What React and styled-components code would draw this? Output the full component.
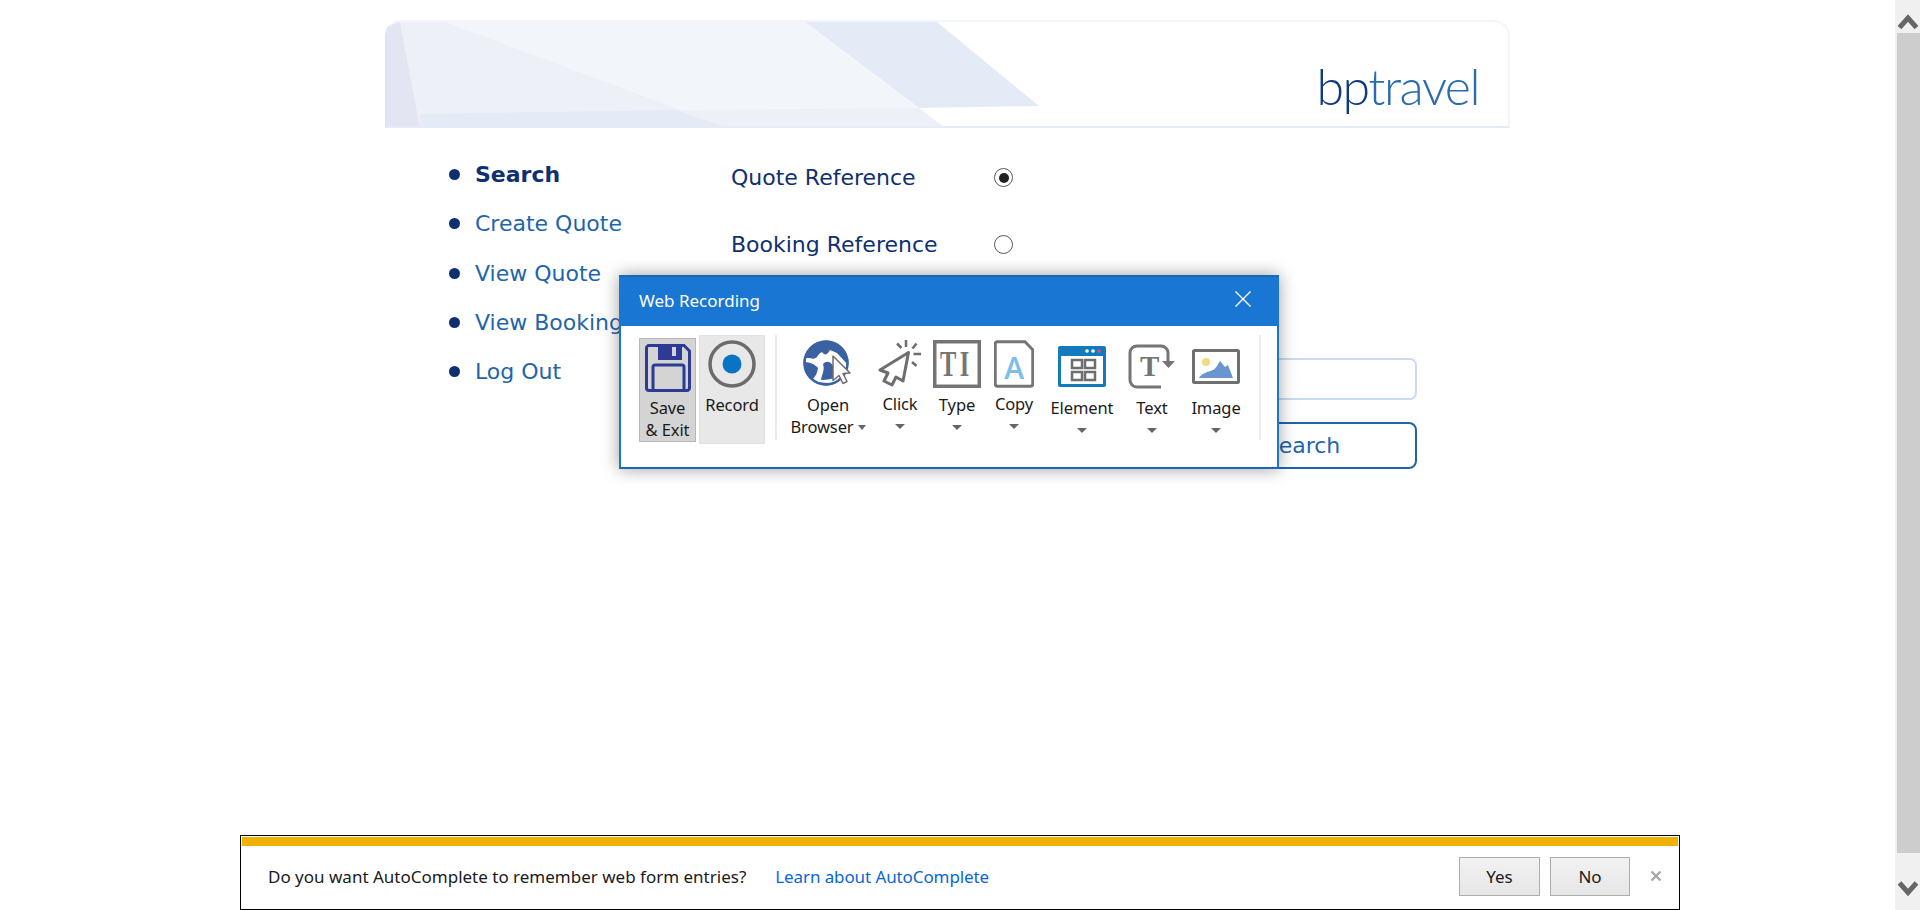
import React from 'react';
import styled, { createGlobalStyle } from 'styled-components';

const GlobalStyle = createGlobalStyle`
    html, body { margin: 0; padding: 0; background: #ffffff; overflow: hidden; }
    * { box-sizing: border-box; }
`

const UI_FONT = `"Noto Sans", "Open Sans", sans-serif`;
const PAGE_FONT = `"DejaVu Sans", Verdana, sans-serif`;

const Page = styled.div`
    width: 1920px; height: 910px;
    display: flex;
    position: relative;
    overflow: hidden;
`

const Main = styled.main`
    flex: 1;
    padding-top: 20px;
`

const Wrapper = styled.div`
    width: 1125px;
    margin: 0 auto;
`

/* banner */
const Banner = styled.header`
    height: 108px;
    display: flex;
    justify-content: flex-end;
    padding: 34px 29px 0 0;
    position: relative;
    overflow: hidden;
    border-radius: 16px 16px 0 0;
    border: 2px solid #f2f5fa;
    border-left-color: #dbe4f4;
    border-bottom-color: #e6ebf6;
`

const BannerArt = styled.svg`
    position: absolute;
    top: 0; left: 0;
`

const Logo = styled.div`
    position: relative;
    font-family: Lato, sans-serif;
    font-weight: 300;
    font-size: 50px;
    line-height: 60px;
    letter-spacing: -1.5px;
    color: #2a6cb0;
    span { color: #0f3a80; }
`

const Content = styled.div`
    display: flex;
`

const Nav = styled.ul`
    width: 346px;
    margin: 0;
    padding: 22px 0 0 64px;
    list-style: none;
    font-family: ${PAGE_FONT};
    font-size: 22px;
`

const NavItem = styled.li`
    height: 49.3px;
    line-height: 49.3px;
    position: relative;
    padding-left: 26px;
    white-space: nowrap;
    color: ${(props) => props.$active ? '#0f3070' : '#1f65ab'};
    font-weight: ${(props) => props.$active ? 'bold' : 'normal'};

    &::before {
        content: '';
        position: absolute;
        left: 0; top: 19px;
        width: 11px; height: 11px;
        border-radius: 50%;
        background: #0f3070;
    }
`

const Form = styled.form`
    width: 686px;
    padding-top: 16px;
    font-family: ${PAGE_FONT};
    font-size: 22px;
    display: flex;
    flex-direction: column;
`

const Row = styled.div`
    height: 67px;
    display: flex;
    align-items: center;
    color: #0f3070;
`

const RowLabel = styled.label`
    width: 263px;
`

const Radio = styled.span`
    width: 19px; height: 19px;
    border-radius: 50%;
    border: 1.5px solid #5a5a5a;
    display: flex;
    align-items: center;
    justify-content: center;

    &::after {
        content: '';
        width: 10px; height: 10px;
        border-radius: 50%;
        background: ${(props) => props.$checked ? '#222222' : 'transparent'};
    }
`

const SearchInput = styled.input`
    align-self: flex-end;
    width: 225px; height: 42px;
    margin-top: 80px;
    border: 2px solid #c9dcf2;
    border-radius: 7px;
    background: #ffffff;
`

const SearchButton = styled.button`
    align-self: flex-end;
    width: 225px; height: 47px;
    margin-top: 22px;
    padding: 0 4px 0 0;
    border: 2px solid #1f65ab;
    border-radius: 8px;
    background: #ffffff;
    color: #1f65ab;
    font-family: ${PAGE_FONT};
    font-size: 22px;
`

/* recording window */
const Dialog = styled.section`
    position: absolute;
    left: 619px; top: 275px;
    width: 660px; height: 194px;
    border: 2px solid #1976d2;
    border-top: 0;
    border-bottom-color: #1a67b8;
    background: #ffffff;
    box-shadow: 0 0 16px rgba(0, 0, 0, 0.38);
    font-family: ${UI_FONT};
`

const TitleBar = styled.div`
    height: 51px;
    margin: 0 -2px;
    padding: 0 27px 2px 20px;
    background: #1976d2;
    border-top: 2px solid #1a67b8;
    color: #ffffff;
    font-size: 17px;
    display: flex;
    align-items: center;
    justify-content: space-between;
`

const CloseIcon = styled.svg`
    width: 18px; height: 18px;
    margin-top: -3px;
`

const Toolbar = styled.div`
    display: flex;
    align-items: flex-start;
    padding: 9px 0 0 18px;
`

const Tool = styled.div`
    width: ${(props) => props.$width}px;
    display: flex;
    flex-direction: column;
    align-items: center;
    color: #1a1a1a;
    font-size: 16.5px;
    line-height: 22px;
    letter-spacing: -0.1px;
`

const ActiveTool = styled(Tool)`
    height: 104px;
    margin-top: 3px;
    margin-right: 3px;
    background: #d4d4d4;
    border: 1px solid #b8b8b8;
`

const RecordTool = styled(Tool)`
    height: 109px;
    background: #e8e8e8;
    border: 1px solid #e2e2e2;
`

const IconSlot = styled.div`
    height: ${(props) => props.$slot || 58}px;
    padding-top: ${(props) => props.$top || 5}px;
    flex-shrink: 0;
    svg { display: block; }
`

const Caret = styled.i`
    display: block;
    width: 0; height: 0;
    margin-top: 9px;
    border-left: 5px solid transparent;
    border-right: 5px solid transparent;
    border-top: 5px solid #666666;
`

const BrowserLine = styled.div`
    display: flex;
    align-items: center;
    gap: 4px;
    ${Caret} { margin-top: 0; border-left-width: 4.5px; border-right-width: 4.5px; }
`

const Separator = styled.div`
    width: 2px; height: 105px;
    background: #ececec;
    margin: 0 ${(props) => props.$right || 0}px 0 ${(props) => props.$left || 0}px;
`

/* autocomplete bar */
const InfoBar = styled.aside`
    position: absolute;
    left: 240px; top: 835px;
    width: 1440px; height: 75px;
    border: 1px solid #000000;
    padding: 1px;
    background: #ffffff;
    font-family: ${UI_FONT};
    font-size: 17px;
    color: #1a1a1a;
`

const InfoStripe = styled.div`
    height: 9px;
    background: #f2b000;
`

const InfoBody = styled.div`
    display: flex;
    align-items: center;
    height: 60px;
    padding: 0 16px 0 26px;
`

const InfoLink = styled.a`
    margin-left: 29px;
    color: #0a66d6;
    letter-spacing: -0.1px;
`

const InfoButton = styled.button`
    width: ${(props) => props.$width}px; height: 39px;
    margin-left: ${(props) => props.$left || 0}px;
    border: 1px solid #adadad;
    background: linear-gradient(#f2f2f2, #e6e6e6);
    color: #1a1a1a;
    font-family: ${UI_FONT};
    font-size: 17px;
`

const InfoClose = styled.svg`
    width: 12px; height: 12px;
    margin-left: 20px;
    margin-top: -1px;
`

const InfoActions = styled.div`
    margin-left: auto;
    display: flex;
    align-items: center;
`

/* scrollbar */
const ScrollBar = styled.div`
    width: 25px; height: 910px;
    background: #f0f0f0;
    display: flex;
    flex-direction: column;
    align-items: center;
    padding-top: 13px;
`

const ScrollThumb = styled.div`
    width: 23px; height: 820px;
    margin: 3px 0 27px 1px;
    background: #cdcdcd;
`

const Chevron = ({ up }) => (
    <svg width="20" height="17" viewBox="0 0 20 17">
        <polyline points={up ? '1.5,14.5 10,5 18.5,14.5' : '1.5,3 10,12.5 18.5,3'} fill="none" stroke="#666666" strokeWidth="5" />
    </svg>
)

const SaveIcon = () => (
    <svg width="46" height="48" viewBox="0 0 46 48">
        <path d="M4 1.5h35l5.5 5.5v37a2.5 2.5 0 0 1-2.5 2.5H4a2.5 2.5 0 0 1-2.5-2.5V4A2.5 2.5 0 0 1 4 1.5z" fill="none" stroke="#2e3a94" strokeWidth="3" />
        <path d="M13 2h24v14H13z" fill="#2e3a94" />
        <path d="M27 3h4v9h-4z" fill="#d4d4d4" />
        <path d="M8 47V23a2 2 0 0 1 2-2h27a2 2 0 0 1 2 2v24" fill="none" stroke="#2e3a94" strokeWidth="3" />
    </svg>
)

const RecordIcon = () => (
    <svg width="48" height="48" viewBox="0 0 48 48">
        <circle cx="24" cy="24" r="22" fill="none" stroke="#6b6b6b" strokeWidth="3.5" />
        <circle cx="24" cy="24" r="9.5" fill="#0a74c4" />
    </svg>
)

const GlobeIcon = () => (
    <svg width="50" height="48" viewBox="0 0 50 48">
        <circle cx="23" cy="23" r="22.5" fill="#3a62a3" />
        <path d="M1 19C6 16 10 21 14 17C16 14 18 11 20 13C22 16 25 14 27 10L34 13L46 26L44 44L8 42C10 38 14 36 15 28C12 24 6 22 1 22Z" fill="#ffffff" />
        <path d="M20 24C24 20 28 22 30 26L34 36C30 39 24 40 18 40C19 34 22 30 20 24Z" fill="#3a62a3" />
        <circle cx="23" cy="23" r="21.500" fill="none" stroke="#3a62a3" strokeWidth="2.500" />
        <path d="M30 16l17 17-7 .5 4 8-4 2-4-8-6 5z" fill="#ffffff" stroke="#6e6e6e" strokeWidth="1.5" strokeLinejoin="round" />
    </svg>
)

const ClickIcon = () => (
    <svg width="44" height="47" viewBox="0 0 44 47">
        <path d="M30.5 12.5L2 30l8 3-4 8 8 4 4-8 7 4z" fill="#ffffff" stroke="#6e6e6e" strokeWidth="3" strokeLinejoin="round" />
        <path d="M19 3.5l4.5 4.5M28 0v7M38.5 3.5L34.500 8.500M35.500 14H43M34 22l4.500 4" fill="none" stroke="#6e6e6e" strokeWidth="2.500" />
    </svg>
)

const TypeIcon = () => (
    <svg width="48" height="48" viewBox="0 0 48 48">
        <rect x="1.75" y="1.75" width="44.5" height="44.5" fill="none" stroke="#757575" strokeWidth="3.5" />
        <text transform="scale(.68 1)" x="10.300" y="36" fontFamily="'Liberation Serif', serif" fontWeight="bold" fontSize="36" fill="#757575" letterSpacing="5">TI</text>
    </svg>
)

const CopyIcon = () => (
    <svg width="40" height="48" viewBox="0 0 40 48">
        <path d="M2.500 1.750H30l7.750 8V44a2.250 2.250 0 0 1-2.250 2.250h-33A2.250 2.250 0 0 1 .25 44V4A2.250 2.250 0 0 1 2.500 1.750z" transform="translate(1 0)" fill="none" stroke="#757575" strokeWidth="3" />
        <text x="20" y="39" textAnchor="middle" fontFamily="'Open Sans', sans-serif" fontWeight="600" fontSize="30" fill="#7dbde8">A</text>
    </svg>
)

const ElementIcon = () => (
    <svg width="48" height="41" viewBox="0 0 48 41">
        <rect width="48" height="41" rx="2" fill="#127bbd" />
        <rect x="3" y="10" width="42" height="28" fill="#ffffff" />
        <circle cx="29" cy="5" r="1.800" fill="#ffffff" />
        <circle cx="35" cy="5" r="1.800" fill="#ffffff" />
        <circle cx="41" cy="5" r="1.800" fill="#ef4a5c" />
        <path d="M14 14h10v8H14zM27 14h10v8H27zM14 26h10v8H14zM27 26h10v8H27z" fill="none" stroke="#6e6e6e" strokeWidth="2.500" />
    </svg>
)

const TextIcon = () => (
    <svg width="48" height="45" viewBox="0 0 48 45">
        <path d="M33 43H9a7 7 0 0 1-7-7V9a7 7 0 0 1 7-7h24a7 7 0 0 1 7 7v13" fill="none" stroke="#757575" strokeWidth="3" />
        <path d="M34 17h13l-6.500 7z" fill="#757575" />
        <text x="21.500" y="32" textAnchor="middle" fontFamily="'Liberation Serif', serif" fontWeight="bold" fontSize="29" fill="#757575">T</text>
    </svg>
)

const ImageIcon = () => (
    <svg width="48" height="35" viewBox="0 0 48 35">
        <rect x="1.500" y="1.500" width="45" height="32" rx="1" fill="#ffffff" stroke="#707070" strokeWidth="3" />
        <circle cx="14" cy="13" r="4" fill="#f0dc80" />
        <path d="M7 29c3-5 9-6 14-8 3-1 5-6 7-9l5 6 3-2 5 13z" fill="#6a96d0" />
    </svg>
)

const App = () => {
    return (
        <Page>
            <GlobalStyle />
            <Main>
                <Wrapper>
                    <Banner>
                        <BannerArt width="1125" height="108" viewBox="0 0 1125 108">
                            <polygon points="418,0 550,0 652,84 532,86" fill="#e4eaf6" />
                            <polygon points="0,0 418,0 558,106 0,106" fill="#f2f5fa" />
                            <polygon points="13,0 58,0 342,106 33,106" fill="#eef0f8" />
                            <polygon points="288,88 532,86 558,106 342,106" fill="#eef0f8" />
                            <polygon points="33,92 288,88 342,106 33,106" fill="#e4eaf6" />
                            <polygon points="0,0 13,0 33,106 0,106" fill="#e3e5f2" />
                        </BannerArt>
                        <Logo><span>bp</span>travel</Logo>
                    </Banner>
                    <Content>
                        <Nav>
                            <NavItem $active>Search</NavItem>
                            <NavItem>Create Quote</NavItem>
                            <NavItem>View Quote</NavItem>
                            <NavItem>View Booking</NavItem>
                            <NavItem>Log Out</NavItem>
                        </Nav>
                        <Form>
                            <Row>
                                <RowLabel>Quote Reference</RowLabel>
                                <Radio $checked />
                            </Row>
                            <Row>
                                <RowLabel>Booking Reference</RowLabel>
                                <Radio />
                            </Row>
                            <SearchInput />
                            <SearchButton type="button">Search</SearchButton>
                        </Form>
                    </Content>
                </Wrapper>
            </Main>

            <Dialog>
                <TitleBar>
                    Web Recording
                    <CloseIcon viewBox="0 0 18 18">
                        <path d="M1.500 1.500l15 15M16.500 1.500l-15 15" stroke="#ffffff" strokeWidth="1.400" fill="none" />
                    </CloseIcon>
                </TitleBar>
                <Toolbar>
                    <ActiveTool $width={57}>
                        <IconSlot><SaveIcon /></IconSlot>
                        <div>Save</div>
                        <div>&amp; Exit</div>
                    </ActiveTool>
                    <RecordTool $width={66}>
                        <IconSlot $top={4}><RecordIcon /></IconSlot>
                        <div>Record</div>
                    </RecordTool>
                    <Separator $left={10} $right={11} />
                    <Tool $width={80}>
                        <IconSlot $slot={59}><GlobeIcon /></IconSlot>
                        <div>Open</div>
                        <BrowserLine>Browser<Caret /></BrowserLine>
                    </Tool>
                    <Tool $width={64}>
                        <IconSlot><ClickIcon /></IconSlot>
                        <div>Click</div>
                        <Caret />
                    </Tool>
                    <Tool $width={50}>
                        <IconSlot $slot={59}><TypeIcon /></IconSlot>
                        <div>Type</div>
                        <Caret />
                    </Tool>
                    <Tool $width={64}>
                        <IconSlot><CopyIcon /></IconSlot>
                        <div>Copy</div>
                        <Caret />
                    </Tool>
                    <Tool $width={72}>
                        <IconSlot $slot={62} $top={11}><ElementIcon /></IconSlot>
                        <div>Element</div>
                        <Caret />
                    </Tool>
                    <Tool $width={68}>
                        <IconSlot $slot={62} $top={9}><TextIcon /></IconSlot>
                        <div>Text</div>
                        <Caret />
                    </Tool>
                    <Tool $width={60}>
                        <IconSlot $slot={62} $top={14}><ImageIcon /></IconSlot>
                        <div>Image</div>
                        <Caret />
                    </Tool>
                    <Separator $left={13} />
                </Toolbar>
            </Dialog>

            <InfoBar>
                <InfoStripe />
                <InfoBody>
                    <span>Do you want AutoComplete to remember web form entries?</span>
                    <InfoLink>Learn about AutoComplete</InfoLink>
                    <InfoActions>
                        <InfoButton $width={81}>Yes</InfoButton>
                        <InfoButton $width={80} $left={10}>No</InfoButton>
                        <InfoClose viewBox="0 0 12 12">
                            <path d="M1.500 1.500l9 9M10.500 1.500l-9 9" stroke="#a8a8a8" strokeWidth="2.400" fill="none" />
                        </InfoClose>
                    </InfoActions>
                </InfoBody>
            </InfoBar>

            <ScrollBar>
                <Chevron up />
                <ScrollThumb />
                <Chevron />
            </ScrollBar>
        </Page>
    )
}

export default App;
